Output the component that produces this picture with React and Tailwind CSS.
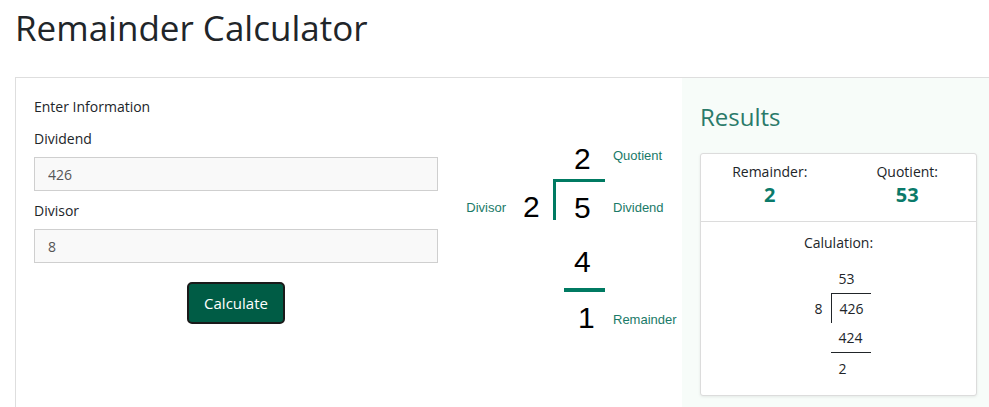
import React, { useState } from 'react';

function Field({ label, value, onChange }) {
    return (
        <div className="flex flex-col">
            <label className="text-[14px] leading-[20px] text-[#212529] mb-[8px]">{label}</label>
            <input
                type="text"
                value={value}
                onChange={(e) => onChange(e.target.value)}
                className="w-[404px] h-[34px] px-[13px] text-[14px] text-[#555] bg-[#f9f9f9] border border-[#cfcfcf] outline-none"
            />
        </div>
    );
}

function Diagram() {
    const digit = "text-[30px] leading-none text-black";
    const label = "text-[13px] text-[#1a7a68]";
    return (
        <div className="flex flex-col pt-[62px] pl-[22px]" style={{ fontFamily: '"Liberation Sans", Arial, sans-serif' }}>
            <div className="flex h-[39px] items-center">
                <div className="w-[92px]" />
                <div className="w-[52px] pl-[21px]"><span className={digit}>2</span></div>
                <div className={`${label} pl-[8px] pb-[8px]`}>Quotient</div>
            </div>
            <div className="flex h-[41px]">
                <div className={`w-[45px] flex items-center justify-end pt-[16px] ${label}`}>Divisor</div>
                <div className="w-[47px] pl-[17px] flex items-center pt-[14px]"><span className={digit}>2</span></div>
                <div className="w-[52px] h-full border-t-[3px] border-l-[3px] border-[#007a62] pl-[18px] pt-[14px] flex items-center">
                    <span className={digit}>5</span>
                </div>
                <div className={`${label} pl-[8px] pt-[16px] flex items-center`}>Dividend</div>
            </div>
            <div className="flex h-[72px]">
                <div className="w-[92px]" />
                <div className="w-[52px] pl-[11px]">
                    <div className="h-full border-b-[4px] border-[#007a62] pl-[10px] pt-[27px]">
                        <span className={digit}>4</span>
                    </div>
                </div>
            </div>
            <div className="flex h-[54px] items-center">
                <div className="w-[92px]" />
                <div className="w-[52px] pl-[25px]"><span className={digit}>1</span></div>
                <div className={`${label} pl-[8px] pt-[2px]`}>Remainder</div>
            </div>
        </div>
    );
}

function Results({ dividend, divisor }) {
    const a = parseInt(dividend, 10) || 0;
    const b = parseInt(divisor, 10) || 1;
    const q = Math.floor(a / b);
    const r = a - q * b;
    return (
        <div className="flex-1 bg-[#f7fcf9] pl-[18px] pt-[22px]">
            <h2 className="text-[24px] leading-[34px] text-[#2a7a6a] mb-[19px]">Results</h2>
            <div className="w-[277px] h-[243px] bg-white border border-[#dcdcdc] rounded-[3px] shadow-[0_1px_3px_rgba(0,0,0,0.08)] flex flex-col">
                <div className="grid grid-cols-2 h-[68px] border-b border-[#dcdcdc] pt-[8px]">
                    <div className="flex flex-col items-center">
                        <span className="text-[14px] leading-[20px] text-[#212529]">Remainder:</span>
                        <span className="text-[20px] leading-[26px] font-bold text-[#0b7a6a]">{r}</span>
                    </div>
                    <div className="flex flex-col items-center">
                        <span className="text-[14px] leading-[20px] text-[#212529]">Quotient:</span>
                        <span className="text-[20px] leading-[26px] font-bold text-[#0b7a6a]">{q}</span>
                    </div>
                </div>
                <div className="flex flex-col items-center pt-[11px]">
                    <span className="text-[14px] leading-[20px] text-[#212529]">Calulation:</span>
                    <div className="mt-[11px] pl-[8px] flex text-[14px] text-[#212529]">
                        <div className="flex flex-col">
                            <div className="h-[29px]" />
                            <div className="h-[30px] flex items-center pr-[8px]">{b}</div>
                        </div>
                        <div className="flex flex-col w-[40px]">
                            <div className="h-[29px] flex items-center pl-[8px]">{q}</div>
                            <div className="h-[30px] flex items-center pl-[8px] border-t border-l border-[#212529]">{a}</div>
                            <div className="h-[30px] flex items-center pl-[8px] border-b border-[#212529]">{q * b}</div>
                            <div className="h-[30px] flex items-center pl-[8px]">{r}</div>
                        </div>
                    </div>
                </div>
            </div>
        </div>
    );
}

export default function App() {
    const [dividend, setDividend] = useState('426');
    const [divisor, setDivisor] = useState('8');

    return (
        <div className="w-[989px] h-[407px] overflow-hidden bg-white" style={{ fontFamily: '"Open Sans", "Noto Sans", sans-serif' }}>
            <h1 className="px-[15px] pt-[4px] text-[35px] leading-[48px] text-[#212529] h-[77px]">Remainder Calculator</h1>
            <div className="ml-[15px] w-[1000px] h-[340px] border border-[#dedede] flex">
                <div className="w-[423px] pl-[18px] pt-[19px] flex flex-col">
                    <div className="text-[14px] leading-[20px] text-[#212529] mb-[12px]">Enter Information</div>
                    <Field label="Dividend" value={dividend} onChange={setDividend} />
                    <div className="h-[10px]" />
                    <Field label="Divisor" value={divisor} onChange={setDivisor} />
                    <div className="w-[404px] flex justify-center mt-[19px]">
                        <button className="w-[98px] h-[42px] bg-[#005c45] border-2 border-[#1a1a1a] rounded-[5px] text-white text-[15px]">
                            Calculate
                        </button>
                    </div>
                </div>
                <div className="w-[243px]">
                    <Diagram />
                </div>
                <Results dividend={dividend} divisor={divisor} />
            </div>
        </div>
    );
}
